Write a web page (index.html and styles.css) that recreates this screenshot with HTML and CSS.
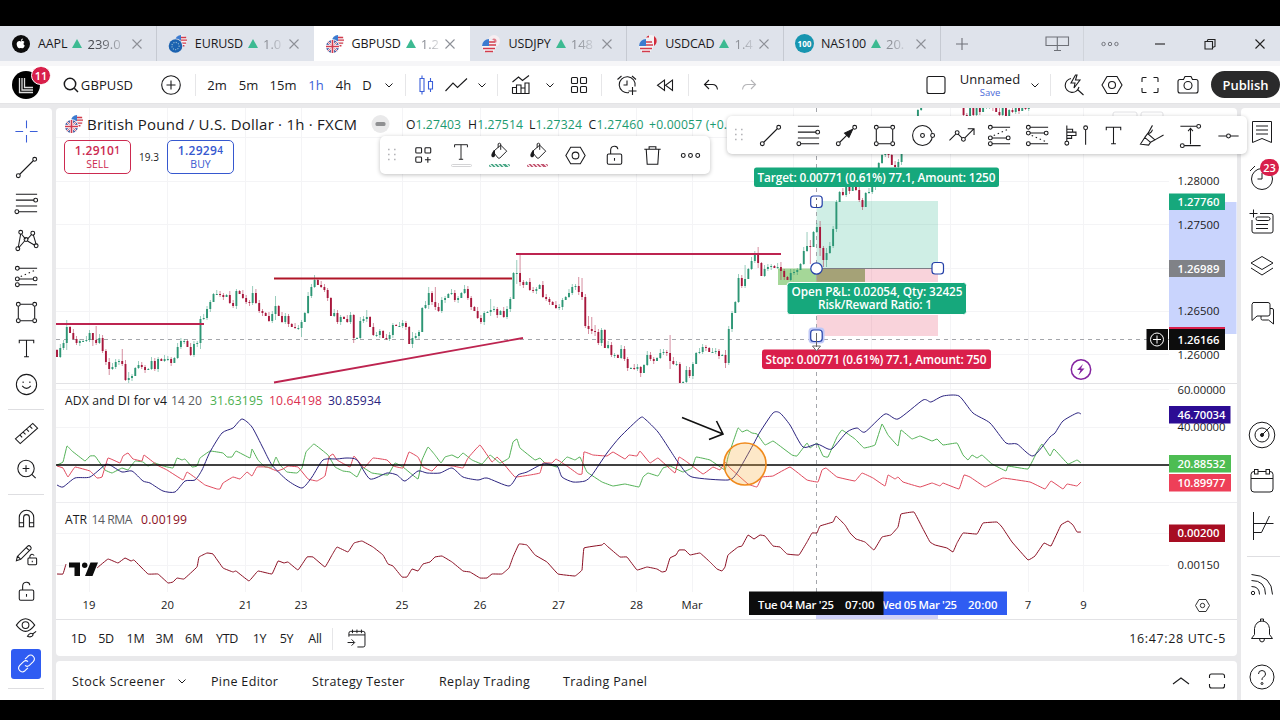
FILE: index.html
```html
<!DOCTYPE html>
<html lang="en">
<head>
  <meta charset="UTF-8">
  <meta name="viewport" content="width=device-width, initial-scale=1.0">
  <title>GBPUSD</title>
  <link rel="stylesheet" href="styles.css">
</head>
<body>
  <!-- icon sprite -->
  <svg class="sprite">
    <symbol id="usa" viewBox="0 0 14 14"><circle cx="7" cy="7" r="7" fill="#f4f4f7"/><path d="M6 3h7M6 6h8M1 9.5h12M3 12.5h8" stroke="#d23c4c" stroke-width="1.7"/><path d="M7 0A7 7 0 0 0 0 7h7z" fill="#3c7bd0"/></symbol>
    <symbol id="uk" viewBox="0 0 14 14"><circle cx="7" cy="7" r="7" fill="#36519b"/><path d="M2 2l10 10M12 2L2 12" stroke="#fff" stroke-width="2.2"/><path d="M2 2l10 10M12 2L2 12" stroke="#d13c50" stroke-width=".8"/><path d="M7 0v14M0 7h14" stroke="#fff" stroke-width="3.6"/><path d="M7 0v14M0 7h14" stroke="#d13c50" stroke-width="1.8"/></symbol>
    <symbol id="flag-gbp" viewBox="0 0 20 20"><use href="#usa" x="7" y="1" width="12" height="12"/><circle cx="7.5" cy="12.5" r="7.2" fill="#fff"/><use href="#uk" x="1" y="6" width="13" height="13"/></symbol>
    <symbol id="flag-eur" viewBox="0 0 20 20"><use href="#usa" x="7" y="1" width="12" height="12"/><circle cx="7.5" cy="12" r="7.6" fill="#dfe3eb"/><circle cx="7.5" cy="12" r="6.8" fill="#1b62b0"/><circle cx="7.5" cy="12" r="3.6" fill="none" stroke="#9fc4d8" stroke-dasharray="1 1.4"/></symbol>
    <symbol id="flag-jpy" viewBox="0 0 20 20"><circle cx="13" cy="7" r="6" fill="#f6eef1"/><circle cx="13" cy="7" r="2.5" fill="#e07a88"/><circle cx="8" cy="12" r="7.4" fill="#dfe3eb"/><use href="#usa" x="1" y="5" width="14" height="14"/></symbol>
    <symbol id="flag-cad" viewBox="0 0 20 20"><circle cx="13" cy="7" r="6" fill="#f6f2f4"/><path d="M16 2a6 6 0 0 1 0 10z" fill="#d02c3c"/><path d="M11 1.5a6 6 0 0 0-3 2h3z" fill="#d02c3c"/><circle cx="8" cy="12" r="7.4" fill="#dfe3eb"/><use href="#usa" x="1" y="5" width="14" height="14"/></symbol>
    <symbol id="apple" viewBox="0 0 20 20"><circle cx="10" cy="10" r="9" fill="#0c0c0c"/><path d="M10 7.5c1-.8 2.8-.6 3.500.4-1.400.9-1.200 3 .3 3.700-.5 1.400-1.400 2.700-2.300 2.700-.7 0-.9-.4-1.700-.4s-1 .4-1.600.4c-1.300 0-3-3-2.400-5.200.5-1.700 2.300-2.400 3.400-1.800zM9.900 6.800c0-1.300.8-2.200 1.900-2.400.1 1.300-.8 2.300-1.900 2.400z" fill="#fff"/></symbol>
    <symbol id="close" viewBox="0 0 12 12"><path d="M1.5 1.5l9 9M10.5 1.5l-9 9"/></symbol>
    <symbol id="chev" viewBox="0 0 10 10"><path d="M1.5 3.5L5 7l3.5-3.5"/></symbol>
    <symbol id="plus-circle" viewBox="0 0 28 28"><circle cx="14" cy="14" r="9.3"/><path d="M14 9.5v9M9.5 14h9"/></symbol>
    <symbol id="search" viewBox="0 0 28 28"><circle cx="13" cy="13" r="5.7"/><path d="M17.3 17.3l3.7 3.7"/></symbol>
    <symbol id="candles" viewBox="0 0 28 28"><path d="M8 7.5h4v13H8zM10 4.5v3M10 20.5v3M16.5 10.5h4V18h-4zM18.5 7v3.5M18.5 18v3"/></symbol>
    <symbol id="line-chart" viewBox="0 0 28 28"><path d="M3.5 20l7.5-8 4.5 4.5 9.5-9"/></symbol>
    <symbol id="indicators" viewBox="0 0 28 28"><path d="M5.5 11l6-5 4 3.5L22 4.5M5.5 22.5v-6h4v6M9.5 22.5V14H14v8.5M14 17h4v5.5M18 22.5V12h4v10.5zM5.5 22.5H18"/></symbol>
    <symbol id="layouts" viewBox="0 0 28 28"><rect x="6.5" y="6.5" width="6" height="6" rx="1"/><rect x="15.5" y="6.5" width="6" height="6" rx="1"/><rect x="6.5" y="15.5" width="6" height="6" rx="1"/><rect x="15.5" y="15.5" width="6" height="6" rx="1"/></symbol>
    <symbol id="alarm" viewBox="0 0 28 28"><path d="M16 21.5a8 8 0 1 1 6-6M14 9.5V14h-3.5M4.5 8.5l4-3.5M19 5l4 3.5M19.5 16v8M15.5 20h8"/></symbol>
    <symbol id="rewind" viewBox="0 0 28 28"><path d="M13.5 9v10.5l-7-5.2zM21.5 9v10.5l-7-5.2z"/></symbol>
    <symbol id="undo" viewBox="0 0 28 28"><path d="M12 9l-4.500 4.500L12 18M8 13.500h7.500c3 0 4.500 1.500 5 5"/></symbol>
    <symbol id="redo" viewBox="0 0 28 28"><path d="M16 9l4.500 4.500L16 18M20 13.500h-7.500c-3 0-4.500 1.500-5 5"/></symbol>
    <symbol id="square" viewBox="0 0 28 28"><rect x="5" y="5.5" width="18" height="17" rx="2"/></symbol>
    <symbol id="flash" viewBox="0 0 28 28"><path d="M12 7.5a7 7 0 1 0 8 8.5M18.5 18.5l6 5.5M16.5 4L12 12h4l-1 5 6-8h-4.5L18 4z"/></symbol>
    <symbol id="hex" viewBox="0 0 28 28"><path d="M9 5.5h10l5 8.500-5 8.500H9L4 14z"/><circle cx="14" cy="14" r="3.5"/></symbol>
    <symbol id="fullscreen" viewBox="0 0 28 28"><path d="M6 11V7.5Q6 6.5 7 6.5h3.5M17.5 6.5H21q1 0 1 1V11M22 17v3.5q0 1-1 1h-3.5M10.5 21.5H7q-1 0-1-1V17"/></symbol>
    <symbol id="camera" viewBox="0 0 28 28"><path d="M6 8.5h3.5l1.5-3h6l1.5 3H22q2 0 2 2V20q0 2-2 2H6q-2 0-2-2v-9.5q0-2 2-2z"/><circle cx="14" cy="14.5" r="4"/></symbol>
    <symbol id="cross" viewBox="0 0 28 28"><path d="M14 2.5v8M14 17.5v8M2.5 14h8M17.5 14h8"/></symbol>
    <symbol id="trend" viewBox="0 0 28 28"><circle cx="5.5" cy="22.5" r="2"/><circle cx="22.5" cy="5.5" r="2"/><path d="M7 21L21 7"/></symbol>
    <symbol id="fib" viewBox="0 0 28 28"><path d="M3 4.5h22M3 10.5h19M3 16.5h22M6 22.5h19"/><circle cx="23.5" cy="10.5" r="2"/><circle cx="4" cy="22.5" r="2"/></symbol>
    <symbol id="pattern" viewBox="0 0 28 28"><path d="M5.5 21L8 7M9 7.5l4 5M15 12.5l4.5-5M21 8l3 10M12 14.5l-6 7M15 14.5l7.5 4.5"/><circle cx="5" cy="22.5" r="2"/><circle cx="8" cy="5.5" r="2"/><circle cx="13.5" cy="13" r="2"/><circle cx="20.5" cy="6.5" r="2"/><circle cx="24" cy="19.5" r="2"/></symbol>
    <symbol id="forecast" viewBox="0 0 28 28"><path d="M6 5.5h19M6 16.5h15M6 22.5h19"/><path d="M8 14l16-7" stroke-dasharray="1.5 3"/><circle cx="4.5" cy="5.5" r="2"/><circle cx="4.5" cy="16.5" r="2"/><circle cx="4.5" cy="22.5" r="2"/><circle cx="23" cy="16.5" r="2"/></symbol>
    <symbol id="forecast2" viewBox="0 0 28 28"><path d="M6 5.5h19M6 11.5h15M6 22.5h19"/><path d="M8 14l16 7" stroke-dasharray="1.5 3"/><circle cx="4.5" cy="5.5" r="2"/><circle cx="4.5" cy="11.5" r="2"/><circle cx="4.5" cy="22.5" r="2"/><circle cx="23" cy="11.5" r="2"/></symbol>
    <symbol id="rect" viewBox="0 0 28 28"><path d="M7.5 5.5h13M7.5 22.5h13M5.5 7.5v13M22.5 7.5v13"/><circle cx="5.5" cy="5.5" r="2"/><circle cx="22.5" cy="5.5" r="2"/><circle cx="5.5" cy="22.5" r="2"/><circle cx="22.5" cy="22.5" r="2"/></symbol>
    <symbol id="text" viewBox="0 0 28 28"><path d="M6.5 8.5v-3h15v3M14 5.5v17M11.5 22.5h5"/></symbol>
    <symbol id="smile" viewBox="0 0 28 28"><circle cx="14" cy="14" r="10.5"/><path d="M9.5 15.5q4.5 5 9 0M10.5 11v1.5M17.5 11v1.5"/></symbol>
    <symbol id="ruler" viewBox="0 0 28 28"><path d="M2.5 19.5l18-16 5 5-18 16zM7 15.5L9.500 18M10.500 12.500L13 15M14 9.500l2.500 2.500M17.500 6.500L20 9"/></symbol>
    <symbol id="zoomin" viewBox="0 0 28 28"><circle cx="13.5" cy="13" r="8.5"/><path d="M13.5 9.5v7M10 13h7M19.5 19l4 4"/></symbol>
    <symbol id="magnet" viewBox="0 0 28 28"><path d="M6.5 22.5V13a7.5 7.5 0 0 1 15 0v9.5H17V13a3 3 0 0 0-6 0v9.5zM6.5 18.5H11M17 18.5h4.5"/></symbol>
    <symbol id="pencil-lock" viewBox="0 0 28 28"><path d="M3.5 19.5l1-4.500L15 4.500q1.500-1.500 3 0t.5 3L8 18zM5 15l3 3M14 6l3 3"/><rect x="15.5" y="16.5" width="9" height="7" rx="1"/><path d="M17.5 16.5v-2q2-3.500 4.500-.5M20 19.500V21"/></symbol>
    <symbol id="lock" viewBox="0 0 28 28"><rect x="6.5" y="12.5" width="15" height="10.5" rx="1.5"/><path d="M10 12.5v-4c0-5 7-5.500 7.500-1M14 16.500v3"/></symbol>
    <symbol id="eye" viewBox="0 0 28 28"><path d="M3.5 11.5q9.500-13 19 0-9.500 13-19 0z"/><circle cx="13" cy="11.5" r="3.5"/><path d="M15 23q3-5 6-1.500-2 3.500-6 1.500zM20 21l4-3"/></symbol>
    <symbol id="link" viewBox="0 0 28 28"><path d="M12.5 9.5l3-3q3-2.500 5.500 0t0 5.500l-4 4q-2.500 2-4.500 0M15.500 18.500l-3 3q-3 2.500-5.500 0T7 16l4-4q2.500-2 4.500 0"/></symbol>
    <symbol id="tpl" viewBox="0 0 28 28"><rect x="6" y="6" width="6" height="5.5" rx="1"/><rect x="15.5" y="6" width="6" height="5.5" rx="1"/><rect x="6" y="15.5" width="6" height="5.5" rx="1"/><path d="M18.5 15.5v6M15.5 18.5h6"/></symbol>
    <symbol id="bucket" viewBox="0 0 28 28"><path d="M8.5 12.5L16 6l7 7-8 8q-1 1-2 0l-5-6zM13 9V4.500q1.500-1.500 3 0v7"/><path d="M8.5 12q-4 5-2.500 7.500 3 1 3-2z" fill="currentColor"/></symbol>
    <symbol id="trash" viewBox="0 0 28 28"><path d="M5.5 7.5h17M10.5 7.5V5h7v2.5M7.5 7.5l1 15.5h11l1-15.500"/></symbol>
    <symbol id="dots" viewBox="0 0 28 28"><circle cx="6.5" cy="14" r="2"/><circle cx="14" cy="14" r="2"/><circle cx="21.5" cy="14" r="2"/></symbol>
    <symbol id="grip" viewBox="0 0 10 14"><path d="M1 1.5h1.6M7 1.5h1.6M1 6.5h1.6M7 6.5h1.6M1 11.5h1.6M7 11.5h1.6" stroke="#b4b4b8" stroke-width="1.6"/></symbol>
    <symbol id="arrow-tool" viewBox="0 0 28 28"><circle cx="5.5" cy="22.5" r="2"/><circle cx="22.5" cy="5.5" r="2"/><path d="M7 21l8-8"/><path d="M20.5 7.5l-8.500 4 4.500 4.500z" fill="currentColor"/></symbol>
    <symbol id="ellipse" viewBox="0 0 28 28"><circle cx="14" cy="14" r="10.3"/><circle cx="14" cy="14" r="2"/><circle cx="24.5" cy="14" r="2" fill="#fff"/></symbol>
    <symbol id="path" viewBox="0 0 28 28"><path d="M1.5 19L8 12.500M10.500 12.500l4 4M17.500 16.500l9-9M20.500 7H27v6.500"/><circle cx="9.5" cy="11" r="2"/><circle cx="16" cy="18" r="2"/></symbol>
    <symbol id="profile" viewBox="0 0 28 28"><path d="M5 3.5V20M5 7.500h6v3H5M11 10.500h3.500V14H5M10 14v3H5M24.500 8v15.500"/><circle cx="5" cy="22" r="2"/><circle cx="24.5" cy="6" r="2"/></symbol>
    <symbol id="brush" viewBox="0 0 28 28"><path d="M2.5 23L7 16l6 5-2 3zM7 16l3-4 7.500 6.500L13 21M10 12.500l5-9M10 12q4 0 5-4M17.500 18.500l9-5"/></symbol>
    <symbol id="range" viewBox="0 0 28 28"><path d="M3.5 4.5h17M7.5 24.5h17M14 7v16M11.5 9.5l2.500-3 2.500 3"/><circle cx="22.5" cy="4.5" r="2"/><circle cx="5.5" cy="24.5" r="2"/></symbol>
    <symbol id="hline" viewBox="0 0 28 28"><path d="M3.5 14.5H12M16 14.5h8.5"/><circle cx="14" cy="14.5" r="2"/></symbol>
    <symbol id="bookmark" viewBox="0 0 28 28"><path d="M4.5 3.5h19v21l-9.500-4-9.500 4zM8 8h12M8 12h12M8 16h12"/></symbol>
    <symbol id="clock" viewBox="0 0 28 28"><circle cx="14" cy="16" r="10.5"/><path d="M14 10v6H9.5M2 8l5-5"/></symbol>
    <symbol id="list" viewBox="0 0 28 28"><path d="M12 5.5h11q2 0 2 2V23q0 2-2 2H6q-2 0-2-2V12M5.5 1.5v8M1.5 5.5h8M8 16.5h12M8 20.5h12"/><rect x="8" y="9" width="14" height="3.5" rx="1.7"/></symbol>
    <symbol id="layers" viewBox="0 0 28 28"><path d="M14 4.5l11 6.5-11 6.5L3 11zM3 16l11 7 11-7"/></symbol>
    <symbol id="chat" viewBox="0 0 28 28"><path d="M5 3.5h15q2 0 2 2V15q0 2-2 2H9l-5 4.500v-16zM22 9.500h2q1.500 0 1.500 1.500v14l-5-4h-6q-1.500 0-1.500-1.500V17"/></symbol>
    <symbol id="target" viewBox="0 0 28 28"><circle cx="14" cy="14" r="12.8"/><circle cx="14" cy="14" r="7"/><circle cx="14" cy="14" r="1.5" fill="currentColor"/><path d="M14 14l8.5-8.5"/></symbol>
    <symbol id="calendar" viewBox="0 0 28 28"><rect x="3" y="4.5" width="22" height="20.5" rx="3"/><path d="M3 11.5h22"/><rect x="6.5" y="2.5" width="3.5" height="4.5" fill="#fff"/><rect x="18" y="2.5" width="3.5" height="4.5" fill="#fff"/></symbol>
    <symbol id="dom" viewBox="0 0 28 28"><path d="M5.5 0v28M5.5 11.5h20M5.5 20.5h8L21.5 4"/></symbol>
    <symbol id="feed" viewBox="0 0 28 28"><circle cx="5" cy="23" r="1.7"/><path d="M3.5 16.5q8 0 8 8M3.5 10.5q14 0 14 14M3.5 4.5q20.5 1 21 20"/></symbol>
    <symbol id="bell" viewBox="0 0 28 28"><path d="M3.5 21.5l3-4v-6Q7.500 4.500 14 4q6.500.5 7.500 7.500v6l3 4zM11.500 21.500q0 3.500 2.500 3.500t2.500-3.500M12.500 4V2h3v2"/></symbol>
    <symbol id="help" viewBox="0 0 28 28"><circle cx="14" cy="14" r="12"/><path d="M10.5 11q0-3.500 3.500-3.500t3.500 3.500q0 2-2 3T14 17"/><circle cx="14" cy="20.5" r="1"/></symbol>
    <symbol id="goto" viewBox="0 0 28 28"><path d="M5.5 12V8q0-2 2-2h14q2 0 2 2v13.500q0 2-2 2H15M5.500 10h18M9.500 4v4M14.500 4v4M19.500 4v4M4 18.500h7.500M8.500 15l3.500 3.500L8.500 22"/></symbol>
    <symbol id="maxi" viewBox="0 0 28 28"><path d="M6.5 11V9q0-2 2-2h11q2 0 2 2v2M21.5 17v2q0 2-2 2h-11q-2 0-2-2v-2"/></symbol>
    <symbol id="screens" viewBox="0 0 28 28"><path d="M3 7h22.5v8.5H3zM14.3 7v13M11 20.5h7"/></symbol>
    <symbol id="restore" viewBox="0 0 12 12"><path d="M1 3.5h7.500V11H1zM3 3.500l1-2h7v7l-2.500 1"/></symbol>
  </svg>

  <div class="app">
    <div class="tabs">
      <div class="tab"><svg class="flag"><use href="#apple"/></svg><b>AAPL</b><i></i><span class="price dark">239.0</span><svg class="x"><use href="#close"/></svg></div>
      <div class="tab"><svg class="flag"><use href="#flag-eur"/></svg><b>EURUSD</b><i></i><span class="price">1.0</span><svg class="x"><use href="#close"/></svg></div>
      <div class="tab active"><svg class="flag"><use href="#flag-gbp"/></svg><b>GBPUSD</b><i></i><span class="price">1.2</span><svg class="x"><use href="#close"/></svg></div>
      <div class="tab"><svg class="flag"><use href="#flag-jpy"/></svg><b>USDJPY</b><i></i><span class="price">148</span><svg class="x"><use href="#close"/></svg></div>
      <div class="tab"><svg class="flag"><use href="#flag-cad"/></svg><b>USDCAD</b><i></i><span class="price">1.4</span><svg class="x"><use href="#close"/></svg></div>
      <div class="tab"><span class="flag nas">100</span><b>NAS100</b><i></i><span class="price">20.</span><svg class="x"><use href="#close"/></svg></div>
      <div class="window-buttons">
        <div><svg class="ico-s"><path d="M6 0v12M0 6h12"/></svg></div>
        <div></div>
        <div class="line"><svg class="ico"><use href="#screens"/></svg></div>
        <div><svg class="ico-m"><use href="#dots"/></svg></div>
        <div class="dark"><svg class="ico-s"><path d="M1 6h10"/></svg></div>
        <div class="dark"><svg class="ico-s"><use href="#restore"/></svg></div>
        <div class="dark"><svg class="ico-s"><use href="#close"/></svg></div>
      </div>
    </div>

    <div class="header">
      <div><span class="avatar"><svg viewBox="0 0 28 28"><path d="M10 7v12h11M12.5 7v9.5H21M7.5 7v14.5H21" stroke="#ddd" stroke-width="1.3" fill="none"/></svg><span class="badge">11</span></span></div>
      <div class="symbol"><svg class="ico"><use href="#search"/></svg>GBPUSD</div>
      <div class="sep"><svg class="ico"><use href="#plus-circle"/></svg></div>
      <div>2m</div>
      <div>5m</div>
      <div>15m</div>
      <div class="blue">1h</div>
      <div>4h</div>
      <div>D</div>
      <div class="sep"><svg class="chev"><use href="#chev"/></svg></div>
      <div class="blue"><svg class="ico"><use href="#candles"/></svg></div>
      <div><svg class="ico"><use href="#line-chart"/></svg></div>
      <div class="sep"><svg class="chev"><use href="#chev"/></svg></div>
      <div><svg class="ico"><use href="#indicators"/></svg></div>
      <div><svg class="chev"><use href="#chev"/></svg></div>
      <div class="sep"><svg class="ico"><use href="#layouts"/></svg></div>
      <div><svg class="ico"><use href="#alarm"/></svg></div>
      <div><svg class="ico"><use href="#rewind"/></svg></div>
      <div class="sep"></div>
      <div><svg class="ico"><use href="#undo"/></svg></div>
      <div class="muted"><svg class="ico"><use href="#redo"/></svg></div>
      <div></div>
      <div><svg class="ico"><use href="#square"/></svg></div>
      <div class="layout-name"><span>Unnamed</span><small>Save</small></div>
      <div><svg class="chev"><use href="#chev"/></svg></div>
      <div class="sep"></div>
      <div><svg class="ico"><use href="#flash"/></svg></div>
      <div><svg class="ico"><use href="#hex"/></svg></div>
      <div><svg class="ico"><use href="#fullscreen"/></svg></div>
      <div><svg class="ico"><use href="#camera"/></svg></div>
      <div class="publish-cell"><button class="publish">Publish</button></div>
    </div>

    <div class="workspace">
      <div class="left-bar">
        <div class="blue"><svg class="ico"><use href="#cross"/></svg></div>
        <div><svg class="ico"><use href="#trend"/></svg></div>
        <div><svg class="ico"><use href="#fib"/></svg></div>
        <div><svg class="ico"><use href="#pattern"/></svg></div>
        <div><svg class="ico"><use href="#forecast"/></svg></div>
        <div><svg class="ico"><use href="#rect"/></svg></div>
        <div><svg class="ico"><use href="#text"/></svg></div>
        <div><svg class="ico"><use href="#smile"/></svg></div>
        <hr>
        <div><svg class="ico"><use href="#ruler"/></svg></div>
        <div><svg class="ico"><use href="#zoomin"/></svg></div>
        <hr>
        <div><svg class="ico"><use href="#magnet"/></svg></div>
        <div><svg class="ico"><use href="#pencil-lock"/></svg></div>
        <div><svg class="ico"><use href="#lock"/></svg></div>
        <div><svg class="ico"><use href="#eye"/></svg></div>
        <div><span class="link-button"><svg class="ico"><use href="#link"/></svg></span></div>
        <hr>
      </div>

      <div class="center">
        <div class="chart-card">
          <div class="chart">
            <svg class="canvas" viewBox="56 108 1181 512">
              <g id="grid"></g>
              <path class="pane-line" d="M56 383.5h1181M56 619.5h1181"/>
              <path class="pane-line faint" d="M56 502.5h1181"/>
              <path class="pane-line" d="M1113 117v-3q0-2 2-2h20q2 0 2 2v3M1141 117v-3q0-2 2-2h18q2 0 2 2v3"/>

              <rect x="778" y="268.5" width="87" height="16.5" fill="#4caf32" fill-opacity=".5"/>
              <rect x="816.5" y="201" width="121.5" height="67.5" fill="#0fa87c" fill-opacity=".2"/>
              <rect x="816.5" y="268.5" width="121.5" height="67.5" fill="#e0244c" fill-opacity=".2"/>
              <rect x="816.5" y="268.5" width="48.5" height="13" fill="#8a7a50" fill-opacity=".3"/>
              <path d="M816 268.5h122" stroke="#7d7d85" fill="none"/>
              <path d="M56 339.5h1113M816.5 108v510" stroke="#a4a6ab" stroke-dasharray="4 4" fill="none"/>

              <g id="candles-layer"></g>

              <path class="trend-line pink" d="M56 324h148M516 254h265"/>
              <path class="trend-line" d="M274 278.5h238"/>
              <path class="trend-line pink" d="M274 382.5L523 338"/>

              <g id="plots"></g>
              <path d="M56 465h1113" stroke="#000" stroke-width="1.7"/>
              <circle cx="745" cy="464" r="21" fill="#f7b24a" fill-opacity=".3" stroke="#f08a1c" stroke-width="1.6"/>
              <path d="M682 417.5L723 434M716.5 421l6.5 13-14 5.5" stroke="#111" stroke-width="1.6" fill="none"/>

              <!-- position tool labels -->
              <rect x="754" y="167.5" width="245" height="19.5" rx="2.5" fill="#16a87c"/>
              <text class="tag" x="757.5" y="181.5" textLength="238">Target: 0.00771 (0.61%) 77.1, Amount: 1250</text>
              <rect x="787" y="282.5" width="179.5" height="32" rx="3" fill="#16a87c" stroke="#fff"/>
              <text class="tag" x="791.5" y="296" textLength="171">Open P&amp;L: 0.02054, Qty: 32425</text>
              <text class="tag" x="818" y="309" textLength="114">Risk/Reward Ratio: 1</text>
              <rect x="762" y="349.5" width="229" height="19.5" rx="2.5" fill="#da1f4b"/>
              <text class="tag" x="765.5" y="363.5" textLength="221">Stop: 0.00771 (0.61%) 77.1, Amount: 750</text>
              <rect x="808.5" y="327.5" width="16" height="16" rx="4" fill="#bfc8f7"/>
              <g fill="#fff" stroke="#2440a8" stroke-width="1.2">
                <rect x="810.700" y="196" width="11.5" height="11.5" rx="3"/>
                <circle cx="816.5" cy="268.5" r="5.7"/>
                <rect x="932" y="262.5" width="11.5" height="11.5" rx="3"/>
                <rect x="810.700" y="330" width="11.5" height="11.5" rx="3"/>
              </g>
              <path d="M816.5 198v2M816.5 204v3M816.5 333v14M812.5 346l4 5 4-5z" stroke="#666" fill="#fff"/>

              <circle cx="1081" cy="369.5" r="9.7" fill="#fff" stroke="#8424a0" stroke-width="1.5"/>
              <path d="M1083 364l-6 6h3.5l-2 5 6-6.5h-3.5z" fill="#8424a0"/>

              <!-- TradingView mark -->
              <path d="M69 562.5h11V576h-5.5v-8.500H69zM90.500 562.500H98L92.500 576H85z" fill="#0d0d0d"/>
              <circle cx="84.7" cy="565.3" r="2.7" fill="#0d0d0d"/>

              <!-- legends -->
              <g class="legend">
                <text x="406" y="128.5" textLength="55">O<tspan class="up">1.27403</tspan></text>
                <text x="468" y="128.5" textLength="55">H<tspan class="up">1.27514</tspan></text>
                <text x="529" y="128.5" textLength="53">L<tspan class="up">1.27324</tspan></text>
                <text x="588.5" y="128.5" textLength="55">C<tspan class="up">1.27460</tspan></text>
                <text class="up" x="649" y="128.5" textLength="78">+0.00057 (+0.</text>
                <text x="65" y="404.5" textLength="102">ADX and DI for v4</text>
                <text x="171" y="404.5" textLength="31" class="soft">14 20</text>
                <text x="210" y="404.5" textLength="53" class="plus">31.63195</text>
                <text x="269" y="404.5" textLength="53" class="minus">10.64198</text>
                <text x="328" y="404.5" textLength="53" class="adx">30.85934</text>
                <text x="65" y="523.5" textLength="22">ATR</text>
                <text x="91.5" y="523.5" textLength="41" class="soft">14 RMA</text>
                <text x="141" y="523.5" textLength="46" class="atr">0.00199</text>
              </g>
              <circle cx="380.5" cy="124" r="9" fill="#e9e9ea"/>
              <rect x="375.5" y="122" width="10" height="4" rx="1.5" fill="#8f9092"/>

              <!-- price scale -->
              <rect x="1169" y="202" width="67.5" height="132" fill="#c9d4fd"/>
              <g class="axis">
                <text x="1177.5" y="185" textLength="42">1.28000</text>
                <text x="1177.5" y="228.5" textLength="42">1.27500</text>
                <text x="1177.5" y="315" textLength="42">1.26500</text>
                <text x="1177.5" y="358.5" textLength="42">1.26000</text>
                <text x="1177.5" y="393.5" textLength="48">60.00000</text>
                <text x="1177.5" y="431" textLength="48">40.00000</text>
                <text x="1177.5" y="569" textLength="42">0.00150</text>
              </g>
              <rect x="1169" y="193.5" width="56" height="16.5" fill="#16a87c"/>
              <rect x="1169" y="260" width="56" height="17" fill="#808287"/>
              <rect x="1169" y="327" width="56" height="4" fill="#da1f4b"/>
              <rect x="1169" y="329" width="56" height="21" fill="#0d0d0d"/>
              <rect x="1146.5" y="329" width="21.5" height="21" fill="#0d0d0d"/>
              <path d="M1157 335.5v8M1153 339.5h8" stroke="#fff"/>
              <circle cx="1157" cy="339.5" r="6.5" stroke="#fff" fill="none"/>
              <rect x="1169" y="406" width="61.5" height="17.5" fill="#2c0c94"/>
              <rect x="1169" y="455" width="62" height="17.5" fill="#4dbd53"/>
              <rect x="1169" y="474" width="62" height="17.5" fill="#ee3f58"/>
              <rect x="1169" y="524.5" width="56" height="17.5" fill="#a70d22"/>
              <g class="axis-tag">
                <text x="1177.5" y="206" textLength="42">1.27760</text>
                <text x="1177.5" y="272.5" textLength="42">1.26989</text>
                <text x="1177.5" y="343.5" textLength="42">1.26166</text>
                <text x="1177.5" y="418.5" textLength="48">46.70034</text>
                <text x="1177.5" y="467.5" textLength="48">20.88532</text>
                <text x="1177.5" y="486.5" textLength="48">10.89977</text>
                <text x="1177.5" y="537" textLength="42">0.00200</text>
              </g>

              <!-- time scale -->
              <rect x="816" y="614" width="122" height="5" fill="#cfd1f8"/>
              <g class="axis time" id="days"></g>
              <rect x="883" y="591.5" width="124" height="23.5" fill="#2f5cf2"/>
              <text class="axis-tag" x="878" y="609" textLength="79">Wed 05 Mar '25</text>
              <text class="axis-tag" x="968" y="609" textLength="29.5">20:00</text>
              <rect x="749" y="591.5" width="134.5" height="23.5" fill="#0d0d0d"/>
              <text class="axis-tag" x="758" y="609" textLength="76">Tue 04 Mar '25</text>
              <text class="axis-tag" x="845" y="609" textLength="29.5">07:00</text>
              <path d="M1199 599.5h7l3.5 6-3.5 6h-7l-3.5-6z" fill="none" stroke="#333"/>
              <circle cx="1202.5" cy="605.5" r="2.2" fill="none" stroke="#333"/>
            </svg>

            <div class="symbol-info">
              <div class="title"><svg class="flag"><use href="#flag-gbp"/></svg><span>British Pound / U.S. Dollar · 1h · FXCM</span></div>
              <div class="quotes">
                <div class="quote sell"><b>1.2910<sup>1</sup></b>SELL</div>
                <span>19.3</span>
                <div class="quote buy"><b>1.2929<sup>4</sup></b>BUY</div>
              </div>
            </div>

            <div class="floating edit-tools">
              <svg class="grip"><use href="#grip"/></svg>
              <svg class="ico"><use href="#tpl"/></svg>
              <span class="swatch"><svg class="ico"><use href="#text"/></svg><em></em></span>
              <span class="swatch green"><svg class="ico"><use href="#bucket"/></svg><em></em></span>
              <span class="swatch red"><svg class="ico"><use href="#bucket"/></svg><em></em></span>
              <svg class="ico"><use href="#hex"/></svg>
              <svg class="ico"><use href="#lock"/></svg>
              <svg class="ico"><use href="#trash"/></svg>
              <svg class="ico"><use href="#dots"/></svg>
            </div>

            <div class="floating draw-tools">
              <svg class="grip"><use href="#grip"/></svg>
              <svg class="ico"><use href="#trend"/></svg>
              <svg class="ico"><use href="#fib"/></svg>
              <svg class="ico"><use href="#arrow-tool"/></svg>
              <svg class="ico"><use href="#rect"/></svg>
              <svg class="ico"><use href="#ellipse"/></svg>
              <svg class="ico"><use href="#path"/></svg>
              <svg class="ico"><use href="#forecast"/></svg>
              <svg class="ico"><use href="#forecast2"/></svg>
              <svg class="ico"><use href="#profile"/></svg>
              <svg class="ico"><use href="#text"/></svg>
              <svg class="ico"><use href="#brush"/></svg>
              <svg class="ico"><use href="#range"/></svg>
              <svg class="ico"><use href="#hline"/></svg>
            </div>
          </div>

          <div class="ranges">
            <div>1D</div><div>5D</div><div>1M</div><div>3M</div><div>6M</div><div>YTD</div><div>1Y</div><div>5Y</div><div class="sep">All</div>
            <div><svg class="ico"><use href="#goto"/></svg></div>
            <div class="clock">16:47:28 UTC-5</div>
          </div>
        </div>

        <div class="panels">
          <span>Stock Screener</span>
          <svg class="chev"><use href="#chev"/></svg>
          <span>Pine Editor</span>
          <span>Strategy Tester</span>
          <span>Replay Trading</span>
          <span>Trading Panel</span>
          <svg class="expand" viewBox="0 0 18 10"><path d="M1 8l8-6 8 6"/></svg>
          <svg class="ico"><use href="#maxi"/></svg>
        </div>
      </div>

      <div class="right-bar">
        <div><svg class="ico"><use href="#bookmark"/></svg></div>
        <div class="alerts"><svg class="ico"><use href="#clock"/></svg><span class="badge">23</span></div>
        <div><svg class="ico"><use href="#list"/></svg></div>
        <div><svg class="ico"><use href="#layers"/></svg></div>
        <div><svg class="ico"><use href="#chat"/></svg></div>
        <div></div>
        <div><svg class="ico"><use href="#target"/></svg></div>
        <div><svg class="ico"><use href="#calendar"/></svg></div>
        <div><svg class="ico"><use href="#dom"/></svg></div>
        <hr>
        <div><svg class="ico"><use href="#feed"/></svg></div>
        <div><svg class="ico"><use href="#bell"/></svg></div>
        <div><svg class="ico"><use href="#help"/></svg></div>
      </div>
    </div>
  </div>

  <script src="chart.js"></script>
</body>
</html>
```
FILE: styles.css
```css
* {
  box-sizing: border-box;
}
body {
  margin: 0;
  padding: 26px 0 20px;
  height: 720px;
  overflow: hidden;
  background: #000;
  color: #1a1a1c;
  font-family: "Open Sans", "Noto Sans", sans-serif;
  font-size: 13px;
}
svg {
  fill: none;
  stroke: currentColor;
  stroke-width: 1.1;
  flex: none;
}
svg text {
  stroke: none;
  fill: #1a1a1c;
}
.sprite {
  position: absolute;
  width: 0;
  height: 0;
}
.ico {
  width: 28px;
  height: 28px;
}
.ico-m {
  width: 24px;
  height: 24px;
}
.ico-s {
  width: 12px;
  height: 12px;
}
.chev {
  width: 10px;
  height: 10px;
  stroke-width: 1;
}
.blue {
  color: #3b5fd9;
}
.muted {
  color: #b5b5b8;
}
.app {
  width: 1280px;
  height: 674px;
  display: flex;
  flex-direction: column;
  background: #e9e9eb;
}

/* tabs */
.tabs {
  display: grid;
  grid-template-columns: repeat(6, 156.8px) 1fr;
  height: 35px;
  background: #dfe3eb;
}
.tab {
  display: flex;
  align-items: center;
  padding: 0 13px 0 11px;
  border-right: 1px solid #c6cad2;
}
.tab:nth-child(2),
.tab.active {
  border-right-color: transparent;
}
.tab.active {
  background: #fff;
}
.tab b {
  font-weight: 500;
  font-size: 12.5px;
  letter-spacing: -0.1px;
  margin-left: 7px;
}
.tab i {
  margin: 0 5px;
  border: 5px solid transparent;
  border-top: 0;
  border-bottom: 9px solid #3dba92;
}
.flag {
  width: 20px;
  height: 20px;
  stroke: none;
}
.nas {
  flex: none;
  width: 19px;
  height: 19px;
  border-radius: 50%;
  background: #1795b0;
  color: #fff;
  font-size: 8px;
  font-weight: 700;
  line-height: 19px;
  text-align: center;
}
.price {
  color: #8d9097;
  -webkit-mask-image: linear-gradient(90deg, #000 30%, rgba(0, 0, 0, 0.25));
  mask-image: linear-gradient(90deg, #000 30%, rgba(0, 0, 0, 0.25));
}
.price.dark {
  color: #44464c;
}
.x {
  width: 12px;
  height: 12px;
  margin-left: auto;
  color: #8d9097;
}
.window-buttons {
  display: grid;
  grid-template-columns: 42px 1fr 54px 52px 48px 52px 44px;
  color: #6e7178;
}
.window-buttons > div {
  display: flex;
  align-items: center;
  justify-content: center;
}
.window-buttons > div:last-child {
  padding-left: 4px;
}
.window-buttons .line {
  border-right: 1px solid #d0d4db;
}
.window-buttons .dark {
  color: #222;
}

/* header */
.header {
  display: grid;
  grid-template-columns: 52px 94px 50px 42px 21px 48px 18px 37px 10px 34px 40px 20px 32px 46px 12px 46px 50px 26px 11px 44px 32px 1fr 36px 72px 18px 7px 44px 34px 42px 34px 75px;
  height: 43px;
  padding-top: 5px;
  border-bottom: 1px solid #e4e4e6;
  background: #fff;
  box-shadow: inset 0 5px #f6f6f8;
}
.header > div {
  position: relative;
  display: flex;
  align-items: center;
  justify-content: center;
  white-space: nowrap;
}
.header .sep::after,
.ranges .sep::after {
  content: "";
  position: absolute;
  right: 0;
  top: 8px;
  height: 22px;
  border-right: 1px solid #e6e6e8;
}
.header .symbol {
  font-weight: 500;
  letter-spacing: 0.1px;
}
.symbol .ico {
  margin: 0 -4px 0 -8px;
  stroke-width: 1.5;
}
.avatar {
  position: relative;
  width: 28px;
  height: 28px;
  border-radius: 50%;
  background: #000;
}
.badge {
  position: absolute;
  top: -4px;
  left: 20px;
  width: 19px;
  height: 17px;
  border-radius: 9px;
  background: #d81f4a;
  color: #fff;
  font-size: 11px;
  font-weight: 600;
  line-height: 17px;
  text-align: center;
}
.avatar .badge {
  left: 19px;
  width: 20px;
  height: 19px;
  top: -5px;
  border: 1px solid #fff;
  border-radius: 10px;
}
.header .layout-name {
  flex-direction: column;
}
.layout-name span {
  height: 14px;
  line-height: 14px;
  letter-spacing: 0.1px;
}
.layout-name small {
  margin-top: 2px;
  font-size: 9.5px;
  line-height: 10px;
  color: #4a68d8;
}
.header .publish-cell {
  padding-left: 6px;
  justify-content: flex-start;
}
.publish {
  width: 69px;
  height: 27px;
  padding: 0;
  border: 0;
  border-radius: 14px;
  background: #2a2a2b;
  color: #fff;
  font: 600 13px "Open Sans", sans-serif;
}

/* workspace */
.workspace {
  flex: 1;
  display: grid;
  grid-template-columns: 52px 1181px 39px;
  gap: 4px;
  padding-top: 4px;
  min-height: 0;
}
.left-bar,
.right-bar {
  display: flex;
  flex-direction: column;
  background: #fff;
}
.left-bar {
  padding-top: 5.4px;
  border-radius: 0 4px 0 0;
}
.left-bar > div {
  height: 36.2px;
  display: flex;
  align-items: center;
  justify-content: center;
}
.left-bar .ico {
  width: 27px;
  height: 27px;
}
hr {
  margin: 6px 8px 5.8px;
  border: 0;
  border-top: 1px solid #dedee1;
}
.link-button {
  width: 30px;
  height: 30px;
  border-radius: 3px;
  background: #2f5cf2;
  color: #fff;
  display: flex;
  align-items: center;
  justify-content: center;
}
.right-bar {
  display: grid;
  grid-template-rows: 47px 44px 45px 44px 50px 74px 46px 46px 43px 14px 46px 47px 1fr;
  border-radius: 4px 0 0 0;
}
.right-bar > div {
  position: relative;
  display: flex;
  align-items: center;
  padding-left: 7px;
}
.right-bar hr {
  margin: 9px 0 0 6px;
}
.right-bar .ico {
  stroke-width: 1;
}
.right-bar .badge {
  top: 4px;
  left: 19px;
}
.center {
  display: flex;
  flex-direction: column;
  gap: 5px;
}
.chart-card {
  height: 548px;
  background: #fff;
  border-radius: 4px;
}
.chart {
  position: relative;
  height: 512px;
}
.canvas {
  display: block;
  width: 1181px;
  height: 512px;
  stroke: none;
  stroke-width: 1;
}
.grid-line {
  stroke: #f4f4f6;
}
.pane-line {
  stroke: #e2e2e5;
}
.pane-line.faint {
  stroke: #ededf0;
}
.trend-line {
  stroke: #b01628;
  stroke-width: 1.8;
}
.trend-line.pink {
  stroke: #bd2450;
}
.plot {
  stroke-width: 1;
  stroke-linejoin: round;
}
.plot.adx {
  stroke: #2c2480;
}
.plot.plus {
  stroke: #52b155;
}
.plot.minus {
  stroke: #e0485c;
}
.plot.atr {
  stroke: #8c1024;
}
.canvas .tag {
  font-size: 11.8px;
  font-weight: 600;
  fill: #fff;
}
.legend text {
  font-size: 12.2px;
}
.legend .up {
  fill: #1c9a70;
}
.legend .soft {
  fill: #5a5b60;
}
.legend .plus {
  fill: #4caf50;
}
.legend .minus {
  fill: #dc3050;
}
.legend .adx {
  fill: #2c2480;
}
.legend .atr {
  fill: #8c1024;
}
.axis text {
  font-size: 11.3px;
}
.canvas .axis-tag,
.canvas .axis-tag text {
  font-size: 11.3px;
  font-weight: 600;
  fill: #fff;
}
.time text {
  text-anchor: middle;
}
.symbol-info {
  position: absolute;
  top: 5px;
  left: 8px;
}
.title {
  display: flex;
  align-items: center;
  gap: 3px;
  height: 21px;
  font-size: 15px;
  letter-spacing: 0.23px;
  white-space: nowrap;
}
.quotes {
  display: flex;
  align-items: center;
  margin-top: 6px;
  font-size: 10px;
}
.quotes > span {
  width: 36px;
  text-align: center;
}
.quote {
  width: 67px;
  height: 34px;
  padding-top: 3px;
  border: 1px solid;
  border-radius: 5px;
  font-size: 10.5px;
  line-height: 13px;
  text-align: center;
}
.quote b {
  display: block;
  font-size: 12px;
  font-weight: 600;
  line-height: 14px;
  letter-spacing: 0.3px;
}
.quote sup {
  font-size: 10px;
  line-height: 0;
  vertical-align: 1px;
}
.sell {
  color: #cc2a50;
}
.buy {
  color: #3658cf;
}

/* floating toolbars */
.floating {
  position: absolute;
  display: grid;
  align-items: center;
  justify-items: center;
  height: 38px;
  background: #fff;
  border-radius: 5px;
  box-shadow: 0 1px 4px rgba(0, 0, 0, 0.25);
}
.edit-tools {
  top: 28px;
  left: 324px;
  width: 330px;
  grid-template-columns: 24px repeat(8, 38.2px);
}
.draw-tools {
  top: 8px;
  left: 671px;
  width: 520px;
  z-index: 2;
  grid-template-columns: 24px repeat(13, 38.2px);
}
.floating .ico {
  width: 27px;
  height: 27px;
}
.floating .grip {
  width: 10px;
  height: 14px;
}
.floating .swatch {
  display: flex;
  flex-direction: column;
  align-items: center;
  padding-bottom: 3px;
}
.swatch .ico {
  width: 24px;
  height: 24px;
}
.swatch em {
  width: 21px;
  height: 3px;
  border: 1px solid #d4d4d6;
  border-radius: 2px;
}
.green em,
.red em {
  border: 0;
  background: repeating-linear-gradient(45deg, #4da888 0 1.5px, #d5ece4 1.5px 3px);
}
.red em {
  background: repeating-linear-gradient(45deg, #c45a74 0 1.5px, #f5dbe2 1.5px 3px);
}

/* date ranges and panels */
.ranges {
  display: grid;
  grid-template-columns: 29px 26px 33px 25px 34px 32px 33px 21px 36px 47px 1fr;
  height: 37px;
  padding: 0 11px 0 8px;
  font-size: 12.5px;
}
.ranges > div {
  position: relative;
  display: flex;
  align-items: center;
  justify-content: center;
  letter-spacing: -0.3px;
}
.ranges .ico {
  width: 25px;
  height: 25px;
}
.ranges .clock {
  justify-content: flex-end;
  letter-spacing: 0.65px;
}
.panels {
  flex: 1;
  display: grid;
  grid-template-columns: 105px 34px 101px 127px 124px 1fr 36px 36px;
  align-items: center;
  padding: 1px 2px 0 16px;
  background: #fff;
  border-radius: 4px 4px 0 0;
  font-size: 12.5px;
}
.panels span {
  letter-spacing: 0.35px;
}
.panels span:first-child {
  letter-spacing: 0.5px;
}
.panels .expand {
  width: 18px;
  height: 10px;
  justify-self: center;
}
.panels .ico {
  justify-self: center;
}
```
FILE: chart.js
```js
const NS = "http://www.w3.org/2000/svg";
const FIRST_X = 57;
const STEP = 3.261;

// one entry per hour: close, or [close, high, low]
const bars = [
  357, 348, 343, [327, 320, 350], 333, 339, 343, 341, 341, 340, 333, [340, 333, 346], [343, 326, 345], 338, 351, 362,
  [369, 358, 375], 367, 362, 361, [364, 349, 366], 380, [378, 372, 383], 376, 368, 365, 367, 370, 369, 361, 369, 359,
  361, 359, 359, 363, 358, 347, 341, 341, 347, 355, 344, 343, [319, 316, 349], 318, 309, 302, 294, 294, 295, 297, 295,
  303, 306, 291, 294, 298, 302, 303, [293, 286, 305], 303, 311, 313, 316, 321, 314, [306, 296, 320], 316, 322, 316, 324,
  327, 328, 328, [322, 320, 337], 313, 296, 287, [280, 275, 288], 285, 287, 290, 298, 316, 313, 322, 317, 319, 322, 315,
  [338, 314, 343], 338, 321, 319, [317, 310, 322], 327, 335, 335, 331, 338, 339, 335, 325, 326, 326, 323, 327, 344,
  [338, 332, 348], 336, 332, 308, 305, [293, 287, 309], 302, [307, 287, 310], 311, 300, 298, 294, 293, 300, 298, 293,
  289, 298, 307, 311, 318, 322, 313, 312, [310, 299, 316], 309, 315, 311, 317, 309, 299, 273, [273, 260, 284],
  [282, 254, 286], 285, 282, 290, 291, 289, 285, 297, 299, 302, 305, 308, 307, 300, 297, 293, 287, 286, [292, 277, 295],
  [297, 278, 300], 326, [329, 316, 334], [331, 317, 334], [332, 325, 336], 343, 330, 348, 345, 355, 355, 358, 349, 359,
  368, 368, 369, 367, [373, 366, 377], 365, 355, 359, 361, 358, 353, 352, 353, [361, 335, 369], 364, 364, 383, 382, 370,
  376, 364, 353, 352, 347, 348, 352, 352, 351, 356, 355, [363, 350, 368], 329, 313, 302, 278, 286, [279, 265, 288], 269,
  261, 254, [263, 247, 268], 276, 269, 267, 266, 268, 267, [271, 262, 280], 277, 280, 273, 272, 270, 264, 251,
  [246, 232, 252], [247, 240, 264], 232, 227, [248, 221, 256], [260, 246, 267], [253, 248, 267], 246, 229, 202, 192, 195,
  187, 191, 187, 190, 200, 207, 193, 192, 187, 177, 163, 155, 150, 155, 165, 167, 162, 150, 145, 138, 130, 118, 110,
  104, 100, 98, 96, 95, 98, 96, 95, 98, 96, 98, 98, 100, 115, 116, 108, 115, 108, 112, 108, 107, 106, 108, 112, 115, 108,
  116, 110, 112, 108, 111, 107, 109, 107
];

const plots = [
  ["plus", "57,465 63,462 67,446 72,451 85,461 90,456 95,456 105,470 112,473 122,468 128,470 135,461 143,462 148,466 155,463 163,466 173,468 177,458 182,460 185,459 192,467 197,466 200,458 210,451 223,453 227,457 232,457 236,451 250,458 252,449 258,460 265,467 272,467 276,457 280,465 287,472 297,473 302,468 306,452 314,444 328,455 335,467 343,471 350,472 357,477 362,467 372,473 388,475 395,463 403,467 418,479 422,460 428,447 435,455 441,463 445,457 452,455 458,458 463,453 472,460 482,464 490,455 500,463 509,458 513,442 517,439 520,448 535,460 540,458 545,463 557,467 567,457 575,460 580,457 587,472 602,482 613,486 625,484 639,487 643,477 648,473 658,476 663,468 670,466 683,472 692,468 696,457 710,460 725,470 728,457 738,428 742,432 747,430 752,433 757,434 765,445 773,441 780,446 792,455 797,456 807,443 810,448 817,443 823,456 828,457 837,437 842,430 855,439 864,448 875,445 882,424 888,435 898,446 901,430 912,439 920,436 932,441 937,439 943,445 957,443 963,455 968,460 972,455 977,458 982,455 992,464 1006,471 1008,466 1028,469 1037,452 1042,444 1050,456 1054,449 1068,464 1077,460 1081,463"],
  ["minus", "57,466 63,468 68,477 75,467 90,471 97,478 102,477 108,458 120,463 123,456 128,453 133,459 142,461 144,455 157,465 167,470 183,480 187,472 197,479 205,485 217,489 220,489 223,483 233,477 240,479 247,472 252,476 257,467 267,467 277,471 283,469 288,466 298,467 308,479 317,481 325,476 329,457 333,454 337,460 350,467 354,456 364,468 373,458 387,460 393,466 403,468 409,452 418,457 423,467 432,471 438,465 453,466 463,468 468,458 480,445 492,462 497,457 503,463 515,477 530,475 540,473 543,463 552,463 556,459 567,466 578,474 582,474 584,452 593,455 607,456 613,452 625,459 629,455 637,456 640,451 650,463 658,458 675,473 679,457 687,462 703,474 713,467 720,470 725,462 730,468 748,484 757,487 762,477 773,476 790,467 807,480 818,482 822,470 826,468 837,477 855,481 862,473 873,478 885,486 888,475 895,479 898,477 903,482 920,487 932,483 940,486 943,483 959,489 964,475 970,477 985,487 993,483 1003,478 1030,482 1045,489 1051,481 1063,489 1067,484 1077,486 1081,482"],
  ["adx", "57,485 63,487 75,478 90,477 105,465 110,465 122,472 132,471 143,481 150,483 163,491 175,492 185,481 195,480 202,470 210,452 222,433 233,428 242,419 252,427 263,448 272,465 287,480 302,488 312,477 323,460 337,459 347,458 357,460 370,479 387,473 397,475 405,481 418,471 427,473 440,473 452,468 463,477 478,480 487,478 509,486 518,475 527,472 543,464 557,466 562,477 573,482 585,481 592,475 607,453 620,437 640,418 645,419 658,432 670,450 680,465 692,477 728,480 737,473 753,445 760,432 773,413 780,413 790,425 803,447 817,444 828,449 833,448 847,432 857,428 865,432 885,414 898,419 923,400 931,402 943,396 959,396 973,413 990,423 1006,443 1017,444 1033,456 1050,437 1055,433 1063,421 1077,413 1081,414"],
  ["atr", "57,574 63,574 66,564"],
  ["atr", "97,568 108,559 118,563 125,558 131,561 134,560 148,574 158,574 168,583 173,582 177,578 184,579 197,567 199,557 207,553 213,554 223,568 233,572 236,571 249,581 258,571 272,574 278,561 284,563 288,562 298,570 307,557 313,557 325,567 332,555 337,547 348,552 354,543 362,541 373,547 383,555 388,564 393,566 402,577 407,577 412,569 418,571 423,564 430,562 435,557 442,556 452,562 463,571 470,572 480,578 487,578 492,574 502,574 509,568 513,557 519,544 527,545 535,555 547,562 558,574 575,576 582,570 584,548 602,545 604,543 607,546 620,557 627,557 637,570 647,567 657,569 662,572 666,571 670,558 676,555 679,550 685,550 690,555 700,553 710,562 717,569 722,571 725,567 728,555 738,547 742,546 748,535 754,539 760,535 765,536 773,546 780,547 787,554 799,555 807,542 812,533 817,533 820,526 833,522 836,516 845,525 850,533 856,539 865,542 874,550 882,537 891,535 898,527 901,514 914,512 922,527 930,542 935,545 947,548 953,552 957,543 963,533 977,534 983,523 997,522 1002,527 1012,542 1028,560 1035,556 1044,543 1051,546 1061,525 1068,521 1073,525 1077,532 1081,532"]
];

const days = [[89, "19"], [167.5, "20"], [245.5, "21"], [301, "23"], [402, "25"], [480, "26"], [558.5, "27"], [636.5, "28"], [692, "Mar"], [793.5, ""], [871.5, ""], [950, ""], [1028, "7"], [1083.5, "9"]];

function add(parent, name, attrs) {
  const el = document.createElementNS(NS, name);
  for (const key in attrs) el.setAttribute(key, attrs[key]);
  parent.appendChild(el);
  return el;
}

// curve through all points, slightly rounded at each one
function curve(points, tension) {
  const p = points.split(" ").map(s => s.split(",").map(Number));
  let d = "M" + p[0];
  for (let i = 0; i < p.length - 1; i++) {
    const before = p[i - 1] || p[i];
    const after = p[i + 2] || p[i + 1];
    const c1 = [p[i][0] + (p[i + 1][0] - before[0]) * tension, p[i][1] + (p[i + 1][1] - before[1]) * tension];
    const c2 = [p[i + 1][0] - (after[0] - p[i][0]) * tension, p[i + 1][1] - (after[1] - p[i][1]) * tension];
    d += `C${c1} ${c2} ${p[i + 1]}`;
  }
  return d;
}

const grid = document.getElementById("grid");
const dayLabels = document.getElementById("days");
for (const [x, label] of days) {
  add(grid, "path", { class: "grid-line", d: `M${Math.floor(x) + 0.5} 108V592` });
  if (label) add(dayLabels, "text", { x: x, y: 609 }).textContent = label;
}
for (const y of [137.5, 181.5, 224.5, 268.5, 311.5, 354.5, 389.5, 427.5, 533.5, 565.5]) {
  add(grid, "path", { class: "grid-line", d: `M56 ${y}H1169` });
}

const layer = document.getElementById("candles-layer");
let open = 350;
bars.forEach((bar, i) => {
  const close = Array.isArray(bar) ? bar[0] : bar;
  const top = Math.min(open, close);
  const bottom = Math.max(open, close);
  const high = Array.isArray(bar) ? Math.min(bar[1], top) : top - (i * 7 % 4) - 1;
  const low = Array.isArray(bar) ? Math.max(bar[2], bottom) : bottom + (i * 5 % 4);
  const x = FIRST_X + i * STEP;
  const color = close <= open ? "#2d9675" : "#a8173c";
  add(layer, "rect", { x: x - 0.4, y: high, width: 0.8, height: Math.min(low, 383) - high, fill: color, "fill-opacity": 0.6 });
  add(layer, "rect", { x: x - 0.95, y: top, width: 1.9, height: Math.max(bottom - top, 1), fill: color });
  open = close;
});

const plotLayer = document.getElementById("plots");
for (const [name, points] of plots) {
  add(plotLayer, "path", { class: "plot " + name, d: curve(points, name === "adx" ? 0.11 : 0.03) });
}
```
